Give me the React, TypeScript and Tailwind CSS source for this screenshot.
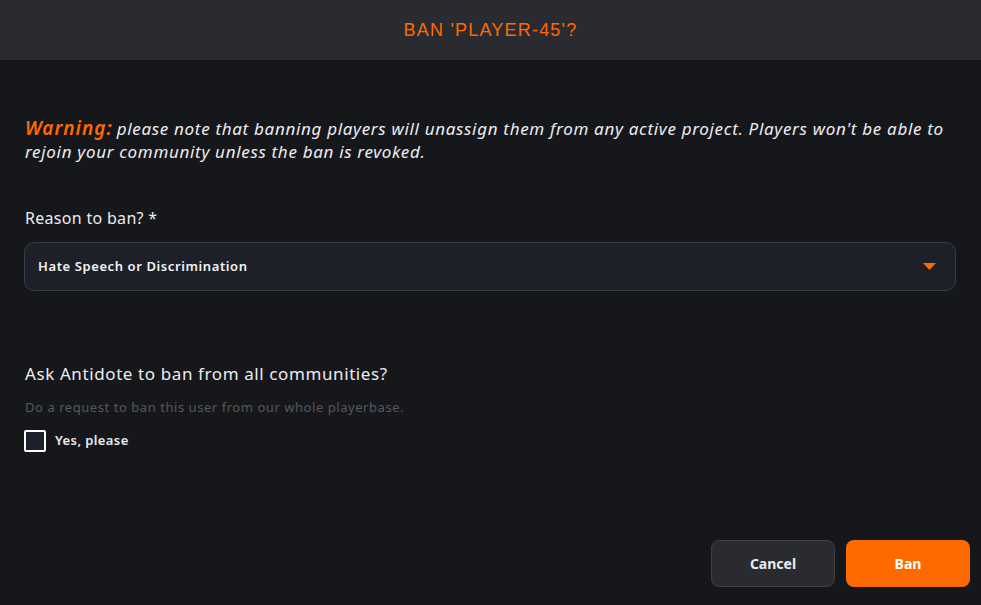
import React, { useState } from 'react';

const REASONS = ['Hate Speech or Discrimination', 'Harassment', 'Cheating', 'Spam'];

export default function App() {
    const [reason] = useState(REASONS[0]);
    const [askAll, setAskAll] = useState(false);

    return (
        <div className="w-[981px] h-[605px] flex flex-col bg-[#16171b] text-[#e8e8ea] font-['Noto_Sans',sans-serif]">
            <div className="h-[60px] shrink-0 flex items-center justify-center bg-[#2a2b30]">
                <h2 className="text-[18px] tracking-[1.2px] text-[#ff6a00] font-['Liberation_Sans',sans-serif] leading-none">
                    BAN 'PLAYER-45'?
                </h2>
            </div>

            <div className="flex-1 flex flex-col px-[25px]">
                <p className="mt-[57px] text-[17px] leading-[23px] italic tracking-[0.68px] text-[#ececee]">
                    <span className="text-[#ff6a00] font-semibold text-[19px] tracking-[1px] mr-[4px]">Warning:</span>please note that banning players will unassign them from any active project. Players won't be able to rejoin your community unless the ban is revoked.
                </p>

                <label className="mt-[44px] text-[16px] leading-[22px] tracking-[0.3px] text-[#ececee]">Reason to ban? *</label>
                <div className="mt-[13px] -ml-px h-[49px] flex items-center justify-between rounded-[10px] border border-[#3a3c45] bg-[#1e2029] pl-[13px] pr-[19px]">
                    <span className="text-[13px] font-semibold tracking-[0.6px] text-[#f2f2f4]">{reason}</span>
                    <svg width="13" height="7" viewBox="0 0 13 7">
                        <path d="M0 0h13L6.5 7z" fill="#ff6a00" />
                    </svg>
                </div>

                <h3 className="mt-[71px] text-[17px] leading-[24px] tracking-[0.6px] text-[#ececee]">Ask Antidote to ban from all communities?</h3>
                <p className="mt-[12px] text-[13px] leading-[18px] tracking-[0.55px] text-[#56585f]">Do a request to ban this user from our whole playerbase.</p>
                <label className="mt-[14px] -ml-px flex items-center gap-[9px] cursor-pointer select-none">
                    <span
                        onClick={() => setAskAll(!askAll)}
                        className="w-[22px] h-[22px] rounded-[2px] border-2 border-white bg-[#1e2029]"
                    />
                    <span className="text-[13px] font-semibold tracking-[0.4px] text-[#ececee]">Yes, please</span>
                </label>

                <div className="mt-auto mb-[18px] -mr-[14px] flex justify-end gap-[11px]">
                    <button className="w-[124px] h-[47px] rounded-[8px] border border-[#3f4046] bg-[#2a2b30] text-[14px] font-bold text-[#ececee]">
                        Cancel
                    </button>
                    <button className="w-[124px] h-[47px] rounded-[8px] bg-[#ff6a00] text-[14px] font-bold text-white">
                        Ban
                    </button>
                </div>
            </div>
        </div>
    );
}
